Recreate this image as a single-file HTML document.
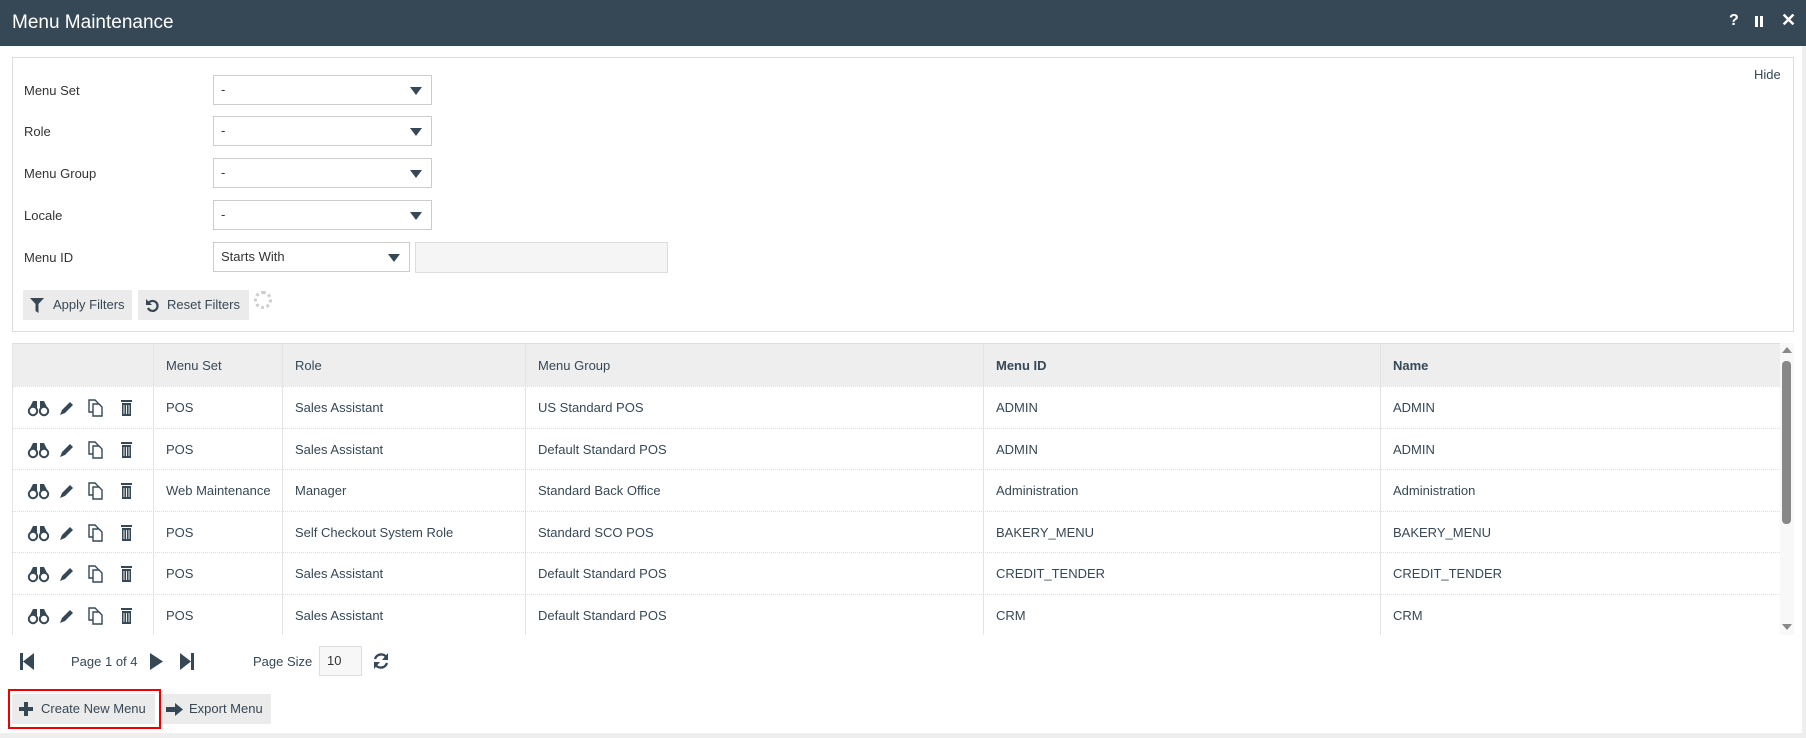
<!DOCTYPE html>
<html><head><meta charset="utf-8"><style>
*{box-sizing:border-box;margin:0;padding:0}
body{width:1806px;height:738px;overflow:hidden;background:#fff;font-family:"Liberation Sans",Arial,sans-serif;font-size:13px;color:#333;position:relative}
.a{position:absolute}
.hdr{left:0;top:0;width:1806px;height:46px;background:#364856;color:#fff}
.sel{position:absolute;height:30px;border:1px solid #ccc;background:#fff;padding-left:7px;line-height:28px;font-size:13px}
.sel:after{content:"";position:absolute;right:9px;top:11px;border-left:6px solid transparent;border-right:6px solid transparent;border-top:8px solid #364856}
.lbl{position:absolute;left:24px}
.btn{position:absolute;background:#ebebeb;height:30px;line-height:30px;font-size:13px;color:#364856}
.th{position:absolute;top:343px;height:43px;line-height:45px;font-size:13px;color:#364856}
.row{position:absolute;left:12px;width:1768px;height:42px;border-top:1px dotted #ddd}
.c{position:absolute;line-height:43px;font-size:13px;color:#364856}
.vl{position:absolute;top:343px;height:292px;width:1px;background:#e4e4e4}
</style></head><body>
<div class="a hdr">
 <div class="a" style="left:12px;top:12px;font-size:19px">Menu Maintenance</div>
 <div class="a" style="left:1729px;top:12px;font-size:16px;font-weight:bold">?</div>
 <div class="a" style="left:1755px;top:16px;width:3px;height:11px;background:#fff"></div>
 <div class="a" style="left:1760px;top:16px;width:3px;height:11px;background:#fff"></div>
 <div class="a" style="left:1781px;top:10px;font-size:18px;font-weight:bold">✕</div>
</div>
<div class="a" style="left:12px;top:57px;width:1782px;height:275px;border:1px solid #ddd"></div>
<div class="a" style="left:1754px;top:67px;color:#364856">Hide</div>
<div class="lbl" style="top:83px">Menu Set</div>
<div class="lbl" style="top:124px">Role</div>
<div class="lbl" style="top:166px">Menu Group</div>
<div class="lbl" style="top:208px">Locale</div>
<div class="lbl" style="top:250px">Menu ID</div>
<div class="sel" style="left:213px;top:75px;width:219px">-</div>
<div class="sel" style="left:213px;top:116px;width:219px">-</div>
<div class="sel" style="left:213px;top:158px;width:219px">-</div>
<div class="sel" style="left:213px;top:200px;width:219px">-</div>
<div class="sel" style="left:213px;top:242px;width:197px">Starts With</div>
<div class="a" style="left:415px;top:242px;width:253px;height:31px;border:1px solid #ddd;background:#f5f5f5"></div>
<div class="btn" style="left:23px;top:290px;width:109px"><svg class="a" style="left:7px;top:8px" width="14" height="15" viewBox="0 0 14 15"><path d="M0 0H14L8.5 6V15L5.5 13V6Z" fill="#364856"/></svg><span class="a" style="left:30px">Apply Filters</span></div>
<div class="btn" style="left:138px;top:290px;width:111px"><svg class="a" style="left:7px;top:8px" width="15" height="15" viewBox="0 0 15 15"><path d="M3.5 5A5 5 0 1 1 3 10" fill="none" stroke="#364856" stroke-width="2.2"/><path d="M1 1V7H7Z" fill="#364856"/></svg><span class="a" style="left:29px">Reset Filters</span></div>
<div class="a" style="left:254px;top:291px;width:18px;height:18px;border-radius:50%;border:3px dotted #ccc"></div>

<div class="a" style="left:12px;top:343px;width:1768px;height:43px;background:#eee;border-top:1px solid #ddd"></div>
<div class="th" style="left:166px">Menu Set</div>
<div class="th" style="left:295px">Role</div>
<div class="th" style="left:538px">Menu Group</div>
<div class="th" style="left:996px;font-weight:bold">Menu ID</div>
<div class="th" style="left:1393px;font-weight:bold">Name</div>
<div class="vl" style="left:153px"></div><div class="vl" style="left:282px"></div><div class="vl" style="left:525px"></div><div class="vl" style="left:983px"></div><div class="vl" style="left:1380px"></div>
<div class="a" style="left:12px;top:343px;width:1px;height:292px;background:#e4e4e4"></div>

<div id="rows"></div>
<script>
var d=[["POS","Sales Assistant","US Standard POS","ADMIN","ADMIN"],["POS","Sales Assistant","Default Standard POS","ADMIN","ADMIN"],["Web Maintenance","Manager","Standard Back Office","Administration","Administration"],["POS","Self Checkout System Role","Standard SCO POS","BAKERY_MENU","BAKERY_MENU"],["POS","Sales Assistant","Default Standard POS","CREDIT_TENDER","CREDIT_TENDER"],["POS","Sales Assistant","Default Standard POS","CRM","CRM"]];
var xs=[166,295,538,996,1393],h="";
var ic='<svg class="a" style="left:15px;top:12px" width="110" height="18" viewBox="0 0 110 18"><g fill="none" stroke="#364856" stroke-width="2"><circle cx="6" cy="12" r="4.2"/><circle cx="17" cy="12" r="4.2"/></g><path d="M3 8L6 2H10V9M20 8L17 2H13V9" fill="#364856"/><path d="M33 16L35 11L43 3L46 6L38 14Z" fill="#364856"/><g fill="none" stroke="#364856" stroke-width="1.4"><path d="M62 1H68L71 4V13H62Z"/><path d="M66 5H72L75 8V17H66Z" fill="#fff"/></g><rect x="94" y="1" width="11" height="2" fill="#364856"/><rect x="95" y="4" width="9" height="13" fill="#364856"/><path d="M97 6V15M99.5 6V15M102 6V15" stroke="#fff" stroke-width="0.9"/></svg>';
for(var i=0;i<6;i++){var t=386+i*41.6;h+='<div class="row" style="top:'+t+'px">'+ic+'</div>';for(var j=0;j<5;j++)h+='<div class="c" style="top:'+t+'px;left:'+xs[j]+'px">'+d[i][j]+'</div>';}
document.getElementById("rows").innerHTML=h;
</script>
<div class="a" style="left:1780px;top:343px;width:14px;height:292px;background:#f8f8f8"></div>
<div class="a" style="left:1782px;top:347px;border-left:5px solid transparent;border-right:5px solid transparent;border-bottom:6px solid #888"></div>
<div class="a" style="left:1782px;top:361px;width:9px;height:163px;background:#888;border-radius:4px"></div>
<div class="a" style="left:1782px;top:624px;border-left:5px solid transparent;border-right:5px solid transparent;border-top:6px solid #888"></div>

<svg class="a" style="left:20px;top:653px" width="16" height="17" viewBox="0 0 16 17"><rect x="0" y="0" width="3" height="17" fill="#364856"/><path d="M14 0V17L3 8.5Z" fill="#364856"/></svg>
<div class="a" style="left:71px;top:654px;color:#364856">Page 1 of 4</div>
<svg class="a" style="left:150px;top:653px" width="13" height="17"><path d="M0 0L13 8.5L0 17Z" fill="#364856"/></svg>
<svg class="a" style="left:180px;top:653px" width="15" height="17"><path d="M0 0L11 8.5L0 17Z" fill="#364856"/><rect x="11" y="0" width="3" height="17" fill="#364856"/></svg>
<div class="a" style="left:253px;top:654px;color:#364856">Page Size</div>
<div class="a" style="left:319px;top:646px;width:43px;height:30px;border:1px solid #ddd;background:#f7f7f7;padding-left:7px;line-height:28px;color:#333">10</div>
<svg class="a" style="left:372px;top:652px" width="18" height="18" viewBox="0 0 18 18"><path d="M3 7A6.5 6.5 0 0 1 15 6M15 11A6.5 6.5 0 0 1 3 12" fill="none" stroke="#364856" stroke-width="2.4"/><path d="M16 1V8H10Z M2 17V10H8Z" fill="#364856"/></svg>

<div class="a" style="left:8px;top:689px;width:153px;height:40px;border:2px solid #e00"></div>
<div class="btn" style="left:12px;top:694px;width:143px;background:#ebebeb"><svg class="a" style="left:7px;top:8px" width="14" height="14"><path d="M5 0H9V5H14V9H9V14H5V9H0V5H5Z" fill="#364856"/></svg><span class="a" style="left:29px">Create New Menu</span></div>
<div class="btn" style="left:161px;top:694px;width:110px"><svg class="a" style="left:5px;top:9px" width="17" height="13"><path d="M0 4H9V0L17 6.5L9 13V9H0Z" fill="#364856"/></svg><span class="a" style="left:28px">Export Menu</span></div>
<div class="a" style="left:0;top:733px;width:1806px;height:5px;background:#eee"></div>
<div class="a" style="left:1802px;top:46px;width:4px;height:692px;background:#eee"></div>
</body></html>
